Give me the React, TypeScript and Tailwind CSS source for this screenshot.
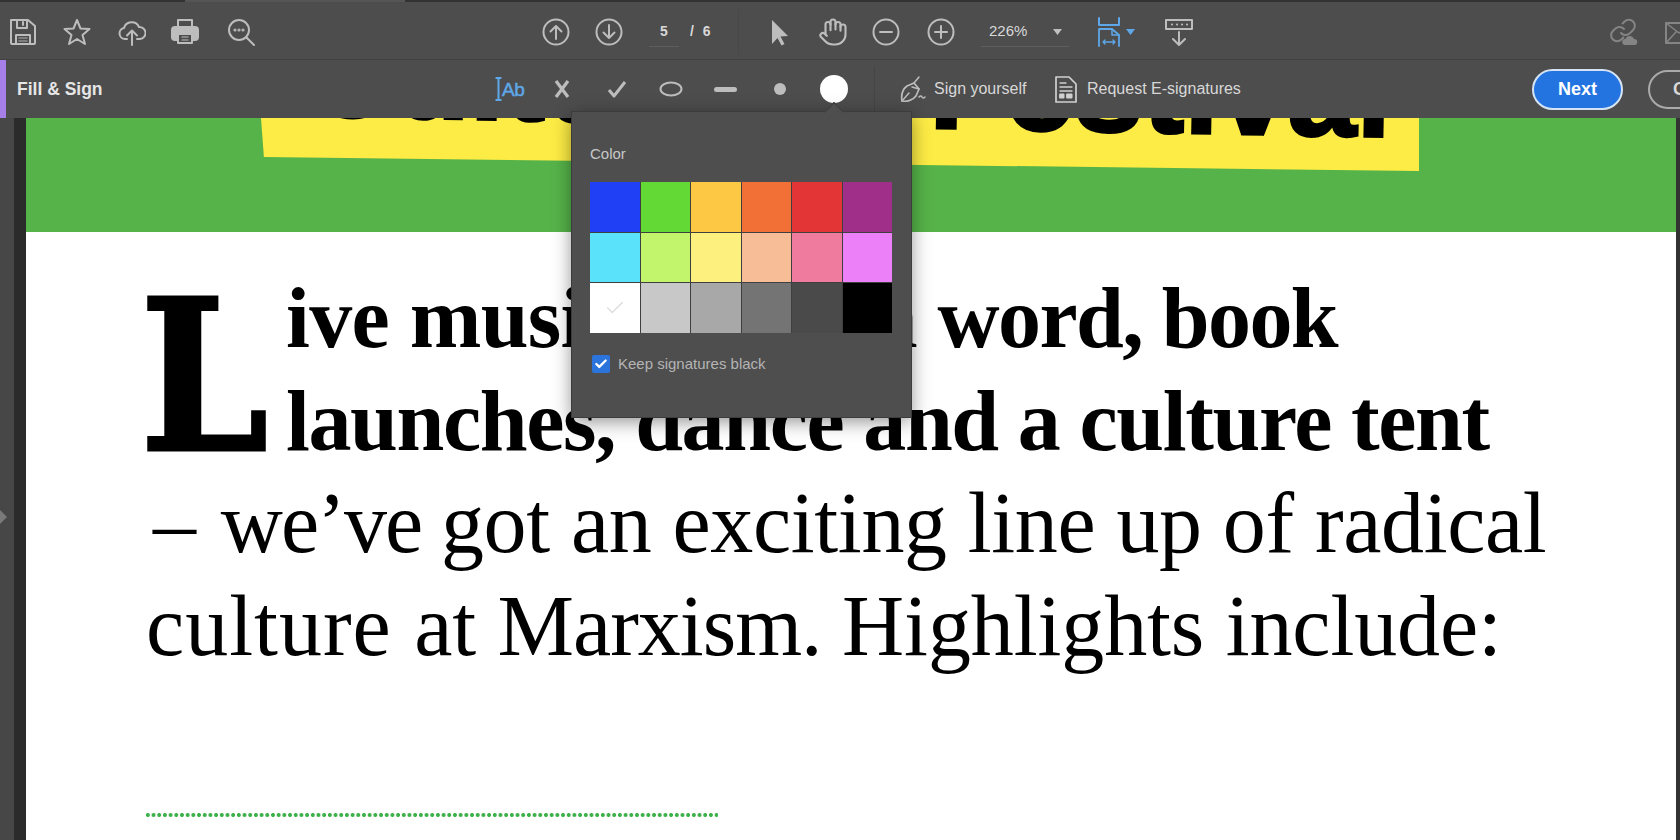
import React from "react";
import { Check, Hand } from "lucide-react";

const swatches = [
  "bg-[#2040f5]","bg-[#63d936]","bg-[#fdc945]","bg-[#f26f35]","bg-[#e33535]","bg-[#9f2f88]",
  "bg-[#5ae2fb]","bg-[#c2f56c]","bg-[#fdf07e]","bg-[#f6bd97]","bg-[#ef7b9f]","bg-[#ec80f8]",
  "bg-[#ffffff]","bg-[#c8c8c8]","bg-[#a8a8a8]","bg-[#747474]","bg-[#4a4a4a]","bg-[#000000]",
];

function Ic({ className = "", children, w = 28, h = 28 }: { className?: string; children: React.ReactNode; w?: number; h?: number }) {
  const tone = className.includes("text-[") ? "" : "text-[#bdbdbd]";
  return (
    <svg width={w} height={h} viewBox={`0 0 ${w} ${h}`} fill="none" stroke="currentColor" strokeWidth={2} strokeLinecap="round" strokeLinejoin="round" className={`shrink-0 ${tone} ${className}`}>
      {children}
    </svg>
  );
}

export default function App() {
  return (
    <div className="relative flex h-[840px] w-[1680px] flex-col overflow-hidden bg-[#4a4a4a] font-['Liberation_Sans',Arial,sans-serif]">
      {/* top strip */}
      <div className="flex h-[3px] shrink-0 bg-[#4d4d4d]">
        <div className="h-[2px] w-[185px] bg-[#333333]" />
        <div className="h-[2px] w-[220px] bg-[#555555]" />
        <div className="h-[2px] flex-1 bg-[#333333]" />
      </div>

      {/* row 1 */}
      <div className="flex h-[57px] shrink-0 items-center overflow-hidden border-b border-[#414141] bg-[#4d4d4d] pt-[2px]">
        <Ic className="ml-[9px]">
          <path d="M2 2h17l7 6v17a1 1 0 0 1-1 1H3a1 1 0 0 1-1-1z" />
          <path d="M8 2v8h10V2M14 4v3M7 26v-9h14v9" />
          <path d="M10 20h8M10 23h8" strokeWidth={1.5} opacity={0.6} />
        </Ic>
        <Ic className="ml-[26px]">
          <polygon points="14,2 17.5,10.5 26.5,11 19.5,17 22,26 14,21 6,26 8.5,17 1.5,11 10.5,10.5" />
        </Ic>
        <Ic className="ml-[27px]">
          <path d="M9 21H7a5.5 5.5 0 0 1-1-10.9A8 8 0 0 1 21 9a6 6 0 0 1 1 12h-3" />
          <path d="M14 27V13M9 17.5l5-5 5 5" />
        </Ic>
        <Ic className="ml-[25px]">
          <rect x="7" y="2" width="14" height="8" />
          <rect x="1" y="9" width="26" height="13" rx="3" fill="currentColor" />
          <rect x="7" y="16" width="14" height="9" fill="#4d4d4d" />
          <path d="M11 19h6M11 22h6" strokeWidth={1.2} />
        </Ic>
        <Ic className="ml-[28px]">
          <circle cx="12" cy="12" r="10" />
          <path d="M19.5 19.5L27 27" />
          <circle cx="8" cy="12" r="0.6" />
          <circle cx="12" cy="12" r="0.6" />
          <circle cx="16" cy="12" r="0.6" />
        </Ic>

        <Ic className="ml-[287px]">
          <circle cx="14" cy="14" r="12.5" />
          <path d="M14 21V8M8.5 13.5L14 8l5.5 5.5" />
        </Ic>
        <Ic className="ml-[25px]">
          <circle cx="14" cy="14" r="12.5" />
          <path d="M14 7v13M8.5 14.5L14 20l5.5-5.5" />
        </Ic>
        <div className="ml-[26px] flex h-[30px] w-[30px] items-center justify-center border-b border-[#5e5e5e] text-[14px] font-bold text-[#d8d8d8]">5</div>
        <div className="ml-[11px] w-[22px] pb-[1px] text-[14px] font-bold whitespace-nowrap text-[#d8d8d8] [word-spacing:5px]">/ 6</div>
        <div className="ml-[26px] h-[46px] w-px bg-[#474747]" />
        <Ic className="ml-[26px]">
          <path d="M7 2v24l5.5-6 4 7.5 3-1.5-4-7.5 7.5-.5z" fill="currentColor" stroke="none" />
        </Ic>
        <Hand size={30} strokeWidth={1.7} className="ml-[25px] shrink-0 text-[#bdbdbd]" />
        <Ic className="ml-[24px]">
          <circle cx="14" cy="14" r="12.5" />
          <path d="M8 14h12" />
        </Ic>
        <Ic className="ml-[27px]">
          <circle cx="14" cy="14" r="12.5" />
          <path d="M8 14h12M14 8v12" />
        </Ic>
        <div className="ml-[26px] flex h-[30px] w-[88px] items-center border-b border-[#5e5e5e] pl-[8px] text-[15px] text-[#d8d8d8]">
          <span>226%</span>
          <svg width="9" height="6" viewBox="0 0 9 6" className="ml-[26px] text-[#c0c0c0]"><path d="M0 0h9L4.5 6z" fill="currentColor" /></svg>
        </div>
        <Ic w={22} h={30} className="ml-[29px] text-[#5ea7e8]">
          <path d="M1 1v7h20V1" />
          <path d="M1 29V12h13l7 6v11" strokeWidth={1.8} />
          <path d="M14 12v6h7" strokeWidth={1.5} />
          <path d="M5 25h12M7 23l-2 2 2 2M15 23l2 2-2 2" strokeWidth={1.3} />
        </Ic>
        <svg width="9" height="6" viewBox="0 0 9 6" className="ml-[6px] shrink-0 text-[#5ea7e8]"><path d="M0 0h9L4.5 6z" fill="currentColor" /></svg>
        <Ic className="ml-[30px]">
          <rect x="1" y="2" width="26" height="9" />
          <path d="M7 6.5h.1M12 6.5h.1M17 6.5h.1M22 6.5h.1" />
          <path d="M14 14v13M8 21l6 6 6-6" />
        </Ic>
        <Ic className="ml-auto text-[#858585]">
          <path d="M11 15a6 6 0 0 0 8.5.6l3.6-3.6a6 6 0 0 0-8.5-8.5l-2 2" />
          <path d="M14 11a6 6 0 0 0-8.5-.6L2.9 13a6 6 0 0 0 8.5 8.5l2-2" />
          <path d="M15 27a3 3 0 0 1 .5-6 4.5 4.5 0 0 1 8.5 0 3 3 0 0 1 .5 6z" fill="currentColor" stroke="none" />
        </Ic>
        <Ic className="ml-[27px] mr-[-13px] text-[#858585]">
          <rect x="1" y="5" width="26" height="20" />
          <path d="M1 5l13 10L27 5M1 25l10-11" strokeWidth={1.5} />
        </Ic>
      </div>

      {/* row 2 */}
      <div className="flex h-[58px] shrink-0 items-center overflow-hidden bg-[#4d4d4d]">
        <div className="h-full w-[6px] shrink-0 bg-[#a77fe8]" />
        <div className="ml-[11px] w-[85px] shrink-0 text-[17.5px] font-bold whitespace-nowrap text-[#e6e6e6]">Fill &amp; Sign</div>
        <div className="ml-[393px] flex w-[28px] shrink-0 items-center text-[#5ea7e8]">
          <svg width="7" height="24" viewBox="0 0 7 24" className="shrink-0"><path d="M0.5 1h6M3.5 1v22M0.5 23h6" stroke="currentColor" strokeWidth="2" fill="none" /></svg>
          <span className="text-[19px] leading-none tracking-[-0.5px] [-webkit-text-stroke:0.5px_#5ea7e8]">Ab</span>
        </div>
        <Ic w={16} h={20} className="ml-[31px]"><path d="M2 2l12 16M14 2L2 18" strokeWidth={3.2} strokeLinecap="butt" /></Ic>
        <Ic w={20} h={18} className="ml-[37px]"><path d="M2 10l5 6L18 2" strokeWidth={3} strokeLinecap="butt" /></Ic>
        <Ic w={24} h={16} className="ml-[32px]"><ellipse cx="12" cy="8" rx="10.5" ry="6.5" /></Ic>
        <div className="ml-[31px] h-[5px] w-[23px] shrink-0 rounded-full bg-[#bdbdbd]" />
        <div className="ml-[37px] h-[12px] w-[12px] shrink-0 rounded-full bg-[#bdbdbd]" />
        <div className="ml-[34px] h-[28px] w-[28px] shrink-0 rounded-full bg-white" />
        <div className="ml-[26px] h-[46px] w-px shrink-0 bg-[#454545]" />
        <Ic w={27} h={28} className="ml-[25px]">
          <path d="M2 26c-1-6 1-12 5-15l7-3 5 6-3 7c-3 4-9 6-14 5z" strokeWidth={1.7} />
          <path d="M2 26l7-8M14 8l5-6M12 12l7 2M19 22q2-2 3 0t3 0" strokeWidth={1.5} />
        </Ic>
        <div className="ml-[7px] w-[93px] shrink-0 text-[16px] whitespace-nowrap text-[#d8d8d8]">Sign yourself</div>
        <Ic w={22} h={27} className="ml-[28px] text-[#d0d0d0]">
          <path d="M1 1h13l7 7v18H1z" strokeWidth={1.7} />
          <path d="M5 7h6M5 11h12M5 15h12" strokeWidth={1.3} />
          <rect x="5" y="18" width="4" height="4" fill="currentColor" strokeWidth={1} />
          <rect x="12" y="18" width="5" height="4" fill="currentColor" strokeWidth={1} />
        </Ic>
        <div className="ml-[10px] w-[153px] shrink-0 text-[16px] whitespace-nowrap text-[#d8d8d8]">Request E-signatures</div>
        <div className="ml-[292px] flex h-[41px] w-[91px] shrink-0 items-center justify-center rounded-full border-2 border-[#d5e4f5] bg-[#2374e1] text-[18px] font-bold text-white">Next</div>
        <div className="ml-[25px] flex h-[39px] w-[90px] shrink-0 items-center rounded-full border-2 border-[#aaaaaa] pl-[23px] text-[18px] font-bold text-[#d8d8d8]">Close</div>
      </div>

      {/* document area */}
      <div className="flex min-h-0 flex-1">
        <div className="flex w-[26px] shrink-0">
          <div className="w-[14px] bg-[#474747] pt-[392px]">
            <svg width="8" height="14" viewBox="0 0 8 14"><path d="M0 0l7 7-7 7z" fill="#7a7a7a" /></svg>
          </div>
          <div className="w-[12px] bg-[#2b2b2b]" />
        </div>
        <div className="min-w-0 flex-1 overflow-hidden bg-white">
          <div className="h-[114px] overflow-hidden bg-[#56b349]">
            <div className="ml-[235px] flow-root h-[53px] w-[1158px] bg-[#fdec45] [clip-path:polygon(0_0,100%_0,100%_100%,0.25%_73.6%)]">
              <div className="mt-[-107px] flex origin-left rotate-[1.1deg] text-[124px] leading-[122px] font-bold whitespace-nowrap text-black [-webkit-text-stroke:3px_black]">
                <span className="ml-[44px] w-[625px] shrink-0">Cultural</span>
                <span>Festival</span>
              </div>
            </div>
          </div>

          <div className="pl-[120px] pt-[35px] font-['Liberation_Serif',serif] text-[86px] leading-[102.5px] whitespace-nowrap text-black">
            <div className="float-left h-[205px] w-[140px]">
              <span className="ml-[-6px] mt-[15px] block origin-top-left scale-x-[0.87] font-['DejaVu_Serif',serif] text-[210px] leading-[190px] font-bold [-webkit-text-stroke:3px_black]">L</span>
            </div>
            <div className="font-bold">
              <span className="tracking-[-0.7px]">ive music, spoken </span>
              <span className="tracking-[-1.64px]">word, book</span>
            </div>
            <div className="font-bold tracking-[-1.4px]">launches, dance and a culture tent</div>
            <div className="clear-left tracking-[-0.36px]">
              <span className="ml-[7px] mr-[4px]">– </span>
              <span className="tracking-[-1.9px]">we’ve </span>
              <span>got an exciting line up of radical</span>
            </div>
            <div className="tracking-[-0.1px]">
              <span className="tracking-[1px]">culture </span>
              <span>at </span>
              <span className="tracking-[-1px]">Marxism. </span>
              <span>Highlights include:</span>
            </div>
            <div className="mt-[136px] ml-[-1px] h-[4px] w-[573px] bg-[radial-gradient(circle,#3fb14a_1.8px,transparent_2.2px)] bg-[length:5.7px_4px]" />
          </div>
        </div>
        <div className="w-[4px] shrink-0 bg-[#333333]" />
      </div>

      {/* colour popover */}
      <div className="absolute left-[572px] top-[112px] h-[305px] w-[339px] bg-[#4e4e4e] pl-[18px] pt-[32px] shadow-[0_4px_18px_rgba(0,0,0,0.45)] outline outline-[#3c3c3c]">
        <div className="absolute left-[255px] top-[-7px] h-[14px] w-[14px] rotate-45 border-l border-t border-[#3c3c3c] bg-[#4e4e4e]" />
        <div className="text-[15px] leading-[20px] text-[#c8c8c8]">Color</div>
        <div className="mt-[18px] grid h-[151px] w-[302px] grid-cols-6 grid-rows-3 gap-px bg-[#3f3f3f]">
          {swatches.map((c, i) => (
            <div key={i} className={`flex items-center justify-center ${c}`}>
              {i === 12 && <Check size={22} strokeWidth={1.5} className="text-[#dddddd]" />}
            </div>
          ))}
        </div>
        <div className="ml-[2px] mt-[20px] flex items-center">
          <div className="flex h-[18px] w-[18px] items-center justify-center rounded-[2px] bg-[#2a74dc]">
            <Check size={14} strokeWidth={4} className="text-white" />
          </div>
          <span className="ml-[8px] text-[15px] text-[#b4b4b4]">Keep signatures black</span>
        </div>
      </div>
    </div>
  );
}
